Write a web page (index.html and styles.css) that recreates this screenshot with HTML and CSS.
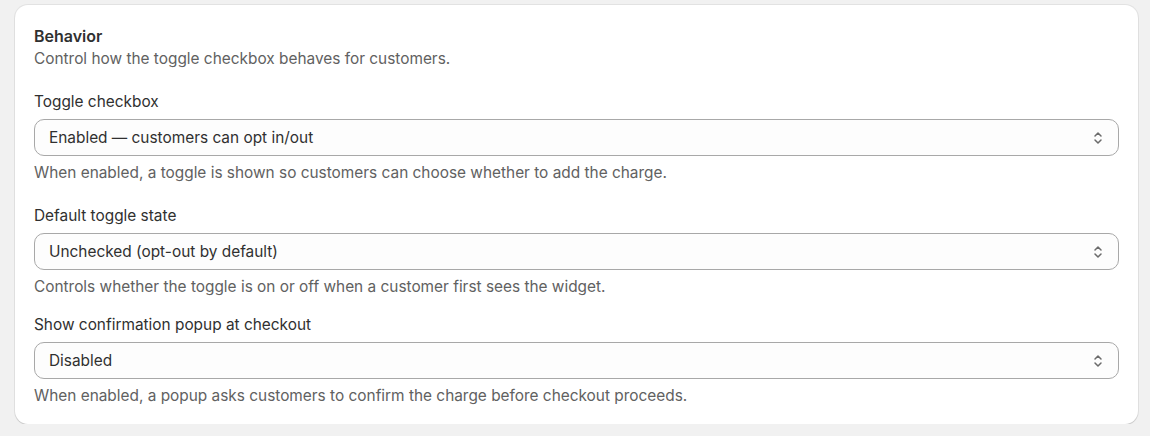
FILE: index.html
```html
<!DOCTYPE html>
<html lang="en">
<head>
<meta charset="utf-8">
<link rel="stylesheet" href="styles.css">
</head>
<body>
<section class="card">
  <header class="card-head">
    <h2 class="title">Behavior</h2>
    <p class="subtitle">Control how the toggle checkbox behaves for customers.</p>
  </header>
  <div class="field">
    <label class="label">Toggle checkbox</label>
    <div class="select">
      <span class="select-value">Enabled — customers can opt in/out</span>
      <svg class="select-icon" viewBox="0 0 10 16" width="10" height="16"><path d="M2 6 L5 3 L8 6 M2 10 L5 13 L8 10" fill="none" stroke="#6b6b6b" stroke-width="1.5" stroke-linecap="round" stroke-linejoin="round"/></svg>
    </div>
    <p class="help">When enabled, a toggle is shown so customers can choose whether to add the charge.</p>
  </div>
  <div class="field">
    <label class="label">Default toggle state</label>
    <div class="select">
      <span class="select-value">Unchecked (opt-out by default)</span>
      <svg class="select-icon" viewBox="0 0 10 16" width="10" height="16"><path d="M2 6 L5 3 L8 6 M2 10 L5 13 L8 10" fill="none" stroke="#6b6b6b" stroke-width="1.5" stroke-linecap="round" stroke-linejoin="round"/></svg>
    </div>
    <p class="help">Controls whether the toggle is on or off when a customer first sees the widget.</p>
  </div>
  <div class="field field-tight">
    <label class="label">Show confirmation popup at checkout</label>
    <div class="select">
      <span class="select-value">Disabled</span>
      <svg class="select-icon" viewBox="0 0 10 16" width="10" height="16"><path d="M2 6 L5 3 L8 6 M2 10 L5 13 L8 10" fill="none" stroke="#6b6b6b" stroke-width="1.5" stroke-linecap="round" stroke-linejoin="round"/></svg>
    </div>
    <p class="help">When enabled, a popup asks customers to confirm the charge before checkout proceeds.</p>
  </div>
</section>
</body>
</html>
```

FILE: styles.css
```css
html, body {
  margin: 0;
  padding: 0;
  background: #f1f1f1;
}
body {
  font-family: Inter, "Noto Sans", sans-serif;
  font-size: 15.4px;
  line-height: 22px;
  color: #303030;
  padding: 5px 12px 0 15px;
}
.card {
  background: #ffffff;
  border-radius: 13px;
  box-shadow: 0 1px 1px rgba(0,0,0,0.12), 0 0 0 1px rgba(0,0,0,0.06);
  padding: 20px 19px 17px 19px;
}
.card-head {
  display: flex;
  flex-direction: column;
  gap: 1px;
}
.title {
  margin: 0;
  font-size: 16px;
  font-weight: 600;
  line-height: 22px;
  color: #303030;
}
.subtitle {
  margin: 0;
  color: #616161;
}
.field {
  display: flex;
  flex-direction: column;
  gap: 6px;
  margin-top: 21px;
}
.field-tight {
  margin-top: 16px;
}
.label {
  color: #303030;
}
.select {
  display: flex;
  align-items: center;
  justify-content: space-between;
  height: 37px;
  box-sizing: border-box;
  border: 1px solid #a8a8a8;
  border-radius: 10px;
  background: #fdfdfd;
  padding: 0 15px 0 14px;
}
.select-value {
  color: #303030;
}
.select-icon {
  display: block;
}
.help {
  margin: 0;
  color: #616161;
}
```
